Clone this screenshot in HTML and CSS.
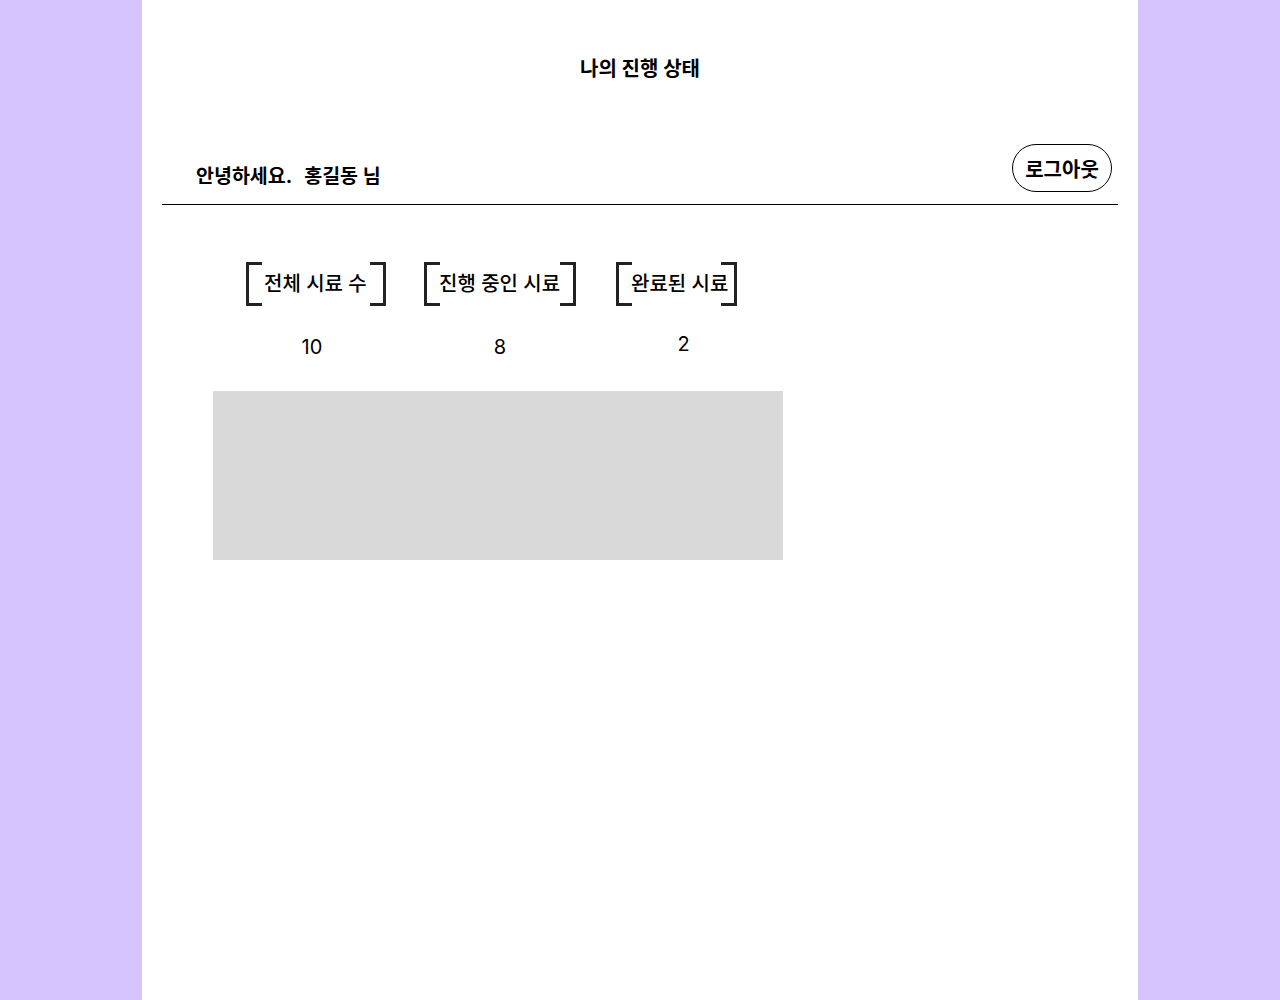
FILE: index.html
```html
<!DOCTYPE html>
<html lang="ko">
<head>
<meta charset="utf-8">
<title>나의 진행 상태</title>
<link rel="stylesheet" href="styles.css">
</head>
<body>
<main class="page">
  <h1 class="page-title">나의 진행 상태</h1>
  <div class="user-bar">
    <p class="greeting"><span>안녕하세요.</span><span>홍길동 님</span></p>
    <button class="logout" type="button">로그아웃</button>
  </div>
  <section class="stats">
    <div class="stat">
      <div class="bracket bracket--total">전체 시료 수</div>
      <div class="stat-value stat-value--left">10</div>
    </div>
    <div class="stat">
      <div class="bracket bracket--progress">진행 중인 시료</div>
      <div class="stat-value">8</div>
    </div>
    <div class="stat stat--done">
      <div class="bracket bracket--done">완료된 시료</div>
      <div class="stat-value stat-value--up">2</div>
    </div>
  </section>
  <div class="placeholder"></div>
</main>
</body>
</html>
```
FILE: styles.css
```css
* { box-sizing: border-box; }

html, body {
  margin: 0;
  padding: 0;
}

body {
  background: #d5c4ff;
  font-family: Inter, "Noto Sans CJK KR", "Noto Sans", sans-serif;
  color: #000;
}

.page {
  width: 996px;
  min-height: 1000px;
  margin: 0 auto;
  background: #fff;
  padding-top: 56px;
}

.page-title {
  margin: 0;
  text-align: center;
  font-size: 20px;
  line-height: 26px;
  font-weight: 700;
}

.user-bar {
  margin: 62px 20px 0;
  padding: 0 6px 12px 34px;
  display: flex;
  justify-content: space-between;
  align-items: flex-end;
  border-bottom: 1px solid #000;
}

.greeting {
  margin: 0 0 4px;
  display: flex;
  gap: 12px;
  font-size: 19.5px;
  line-height: 24px;
  font-weight: 700;
}

.logout {
  width: 100px;
  height: 48px;
  border: 1px solid #000;
  border-radius: 24px;
  background: #fff;
  font-family: inherit;
  font-size: 20px;
  font-weight: 700;
  color: #000;
  padding: 0;
}

.stats {
  margin-top: 57px;
  padding-left: 104px;
  display: flex;
  gap: 38px;
}

.stat--done { margin-left: 2px; }

.stat {
  display: flex;
  flex-direction: column;
  align-items: center;
}

.bracket {
  position: relative;
  height: 44px;
  display: flex;
  align-items: center;
  font-size: 20px;
  font-weight: 500;
  line-height: 24px;
  white-space: nowrap;
  overflow: visible;
}

.bracket::before,
.bracket::after {
  content: "";
  position: absolute;
  top: 0;
  bottom: 0;
  width: 13px;
  border: 3px solid #222;
}

.bracket::before { left: 0; border-right: none; }
.bracket::after { right: 0; border-left: none; }

.bracket--total { width: 140px; padding-left: 18px; }
.bracket--progress { width: 152px; padding-left: 15px; }
.bracket--done { width: 121px; padding-left: 15px; }

.stat-value {
  margin-top: 29px;
  font-size: 20px;
  line-height: 24px;
  font-weight: 400;
}

.stat-value--left { margin-right: 8px; }
.stat-value--up { margin-top: 26px; margin-left: 14px; }

.placeholder {
  margin: 32px 0 0 71px;
  width: 570px;
  height: 169px;
  background: #d9d9d9;
}
```
